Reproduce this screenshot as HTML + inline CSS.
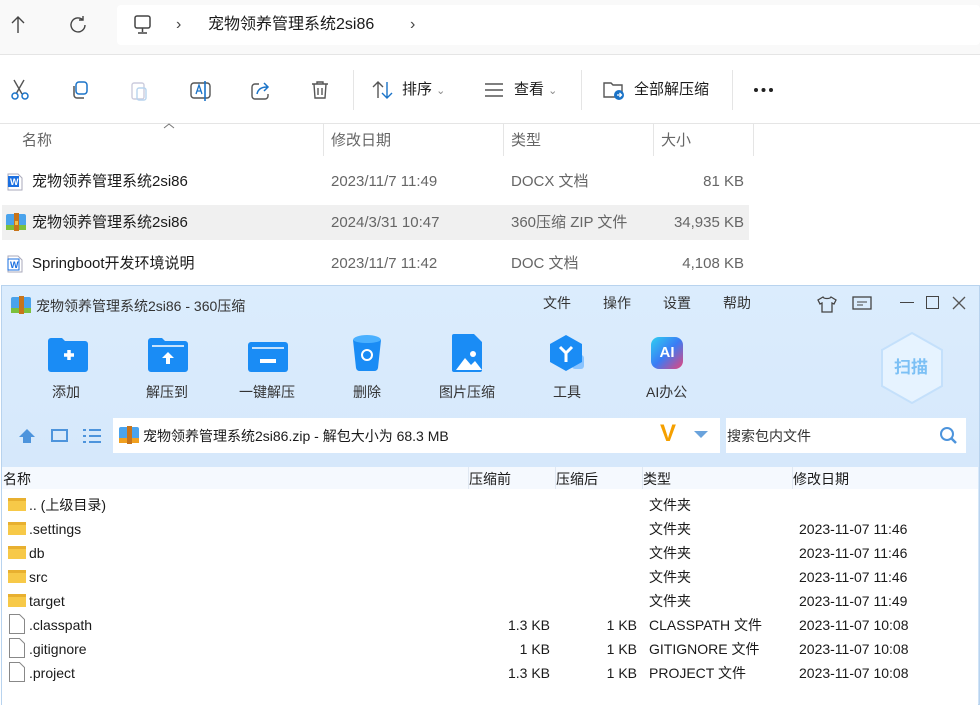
<!DOCTYPE html>
<html><head><meta charset="utf-8"><style>
*{margin:0;padding:0;box-sizing:border-box}
body{width:980px;height:705px;overflow:hidden;background:#fff;font-family:"Liberation Sans","Noto Sans CJK SC",sans-serif;position:relative;color:#1a1a1a;line-height:20px}
.a{position:absolute;white-space:nowrap}
.t{font-size:15px}
.g{color:#666}
.s{font-size:14px}
</style></head><body>
<div class="a" style="left:0;top:0;width:980px;height:55px;background:#f9f9f9;border-bottom:1px solid #e5e5e5"></div>
<div class="a" style="left:117px;top:5px;width:863px;height:40px;background:#fff;border-radius:4px"></div>
<svg class="a" style="left:10px;top:15px" width="16" height="20"><path d="M8 2v16M2 8l6-6 6 6" fill="none" stroke="#444" stroke-width="1.4"/></svg>
<svg class="a" style="left:68px;top:15px" width="20" height="20"><path d="M15 5a7 7 0 1 0 2 5" fill="none" stroke="#444" stroke-width="1.4"/><path d="M15 1v4h-4" fill="none" stroke="#444" stroke-width="1.4"/></svg>
<svg class="a" style="left:133px;top:15px" width="20" height="20"><rect x="2" y="1" width="15" height="12" rx="2" fill="none" stroke="#444" stroke-width="1.5"/><path d="M9.5 13v4M5 18h9" stroke="#444" stroke-width="1.5"/></svg>
<div class="a" style="left:176px;top:15px;font-size:16px;color:#444">›</div>
<div class="a" style="left:208px;top:15px;font-size:16px">宠物领养管理系统2si86</div>
<div class="a" style="left:410px;top:15px;font-size:16px;color:#444">›</div>

<svg class="a" style="left:8px;top:78px" width="24" height="24"><path d="M6 2l8 14M16 2L8 16" stroke="#555" stroke-width="1.4"/><circle cx="7" cy="18" r="3" fill="none" stroke="#1a73c8" stroke-width="1.5"/><circle cx="17" cy="18" r="3" fill="none" stroke="#1a73c8" stroke-width="1.5"/></svg>
<svg class="a" style="left:70px;top:80px" width="20" height="20"><rect x="6" y="2" width="11" height="12" rx="3" fill="none" stroke="#1a73c8" stroke-width="1.5"/><path d="M4 6v9a3 3 0 0 0 3 3h7" fill="none" stroke="#555" stroke-width="1.5"/></svg>
<svg class="a" style="left:130px;top:80px" width="20" height="22"><rect x="2" y="3" width="12" height="16" rx="2" fill="none" stroke="#ccd" stroke-width="1.4"/><rect x="7" y="8" width="9" height="12" rx="2" fill="none" stroke="#b8d4ee" stroke-width="1.4"/></svg>
<svg class="a" style="left:189px;top:80px" width="24" height="22"><rect x="2" y="3" width="19" height="15" rx="3" fill="none" stroke="#555" stroke-width="1.4"/><path d="M7 14l3-9 3 9M8 11h4" stroke="#1a73c8" stroke-width="1.3" fill="none"/><path d="M16 1v20" stroke="#1a73c8" stroke-width="1.6"/></svg>
<svg class="a" style="left:250px;top:80px" width="22" height="22"><path d="M9 4H5a3 3 0 0 0-3 3v9a3 3 0 0 0 3 3h10a3 3 0 0 0 3-3v-2" fill="none" stroke="#555" stroke-width="1.4"/><path d="M7 14c1-5 5-7 10-7M14 3l4 4-4 4" fill="none" stroke="#1a73c8" stroke-width="1.5"/></svg>
<svg class="a" style="left:309px;top:79px" width="22" height="22"><path d="M3 5h16M8 5V3h6v2M5 5l1 14h10l1-14M9 9v7M13 9v7" fill="none" stroke="#555" stroke-width="1.4"/></svg>
<div class="a" style="left:353px;top:70px;width:1px;height:40px;background:#e5e5e5"></div>
<svg class="a" style="left:372px;top:80px" width="22" height="20"><path d="M6 18V2M1 7l5-5 5 5" fill="none" stroke="#555" stroke-width="1.4"/><path d="M15 2v16M10 13l5 5 5-5" fill="none" stroke="#1a73c8" stroke-width="1.4"/></svg>
<div class="a" style="left:402px;top:80px;font-size:15px">排序 <span style="color:#888;font-size:11px">⌄</span></div>
<svg class="a" style="left:484px;top:82px" width="20" height="16"><path d="M1 2h18M1 8h18M1 14h18" stroke="#555" stroke-width="1.4"/></svg>
<div class="a" style="left:514px;top:80px;font-size:15px">查看 <span style="color:#888;font-size:11px">⌄</span></div>
<div class="a" style="left:581px;top:70px;width:1px;height:40px;background:#e5e5e5"></div>
<svg class="a" style="left:602px;top:78px" width="24" height="24"><path d="M2 5h7l2 2h9v12H2z" fill="none" stroke="#555" stroke-width="1.4"/><circle cx="17" cy="17" r="5" fill="#1a73c8"/><path d="M15 17h4M17.5 15l2 2-2 2" stroke="#fff" stroke-width="1.3" fill="none"/></svg>
<div class="a" style="left:634px;top:80px;font-size:15px">全部解压缩</div>
<div class="a" style="left:732px;top:70px;width:1px;height:40px;background:#e5e5e5"></div>
<svg class="a" style="left:753px;top:87px" width="22" height="6"><circle cx="3" cy="3" r="2" fill="#222"/><circle cx="10.5" cy="3" r="2" fill="#222"/><circle cx="18" cy="3" r="2" fill="#222"/></svg>
<div class="a" style="left:0;top:123px;width:980px;height:1px;background:#e5e5e5"></div>

<svg class="a" style="left:163px;top:122px" width="12" height="8"><path d="M1 6l5-4 5 4" fill="none" stroke="#777"/></svg>
<div class="a g t" style="left:22px;top:131px">名称</div>
<div class="a" style="left:323px;top:124px;width:1px;height:32px;background:#e5e5e5"></div>
<div class="a g t" style="left:331px;top:131px">修改日期</div>
<div class="a" style="left:503px;top:124px;width:1px;height:32px;background:#e5e5e5"></div>
<div class="a g t" style="left:511px;top:131px">类型</div>
<div class="a" style="left:653px;top:124px;width:1px;height:32px;background:#e5e5e5"></div>
<div class="a g t" style="left:661px;top:131px">大小</div>
<div class="a" style="left:753px;top:124px;width:1px;height:32px;background:#e5e5e5"></div>

<div class="a" style="left:2px;top:205px;width:747px;height:35px;background:#f0f0f0"></div>
<svg class="a" style="left:7px;top:173px" width="16" height="18"><path d="M1 1h10l4 4v12H1z" fill="#fff" stroke="#aab"/><rect x="1" y="3" width="11" height="11" fill="#1a6fe0"/><text x="3" y="12" fill="#fff" font-size="9" font-weight="bold" font-family="Liberation Sans">W</text></svg>
<div class="a t" style="left:32px;top:172px">宠物领养管理系统2si86</div>
<div class="a t g" style="left:331px;top:172px">2023/11/7 11:49</div>
<div class="a t g" style="left:511px;top:172px">DOCX 文档</div>
<div class="a t g" style="left:664px;top:172px;width:80px;text-align:right">81 KB</div>
<svg class="a" style="left:6px;top:213px" width="20" height="18"><rect x="0" y="1" width="20" height="15" rx="2" fill="#4aa3ec"/><rect x="0" y="12" width="20" height="5" fill="#7cc03c"/><rect x="8" y="0" width="5" height="18" fill="#c8741a"/><rect x="9" y="8" width="3" height="4" fill="#f3c04a"/></svg>
<div class="a t" style="left:32px;top:213px">宠物领养管理系统2si86</div>
<div class="a t g" style="left:331px;top:213px">2024/3/31 10:47</div>
<div class="a t g" style="left:511px;top:213px">360压缩 ZIP 文件</div>
<div class="a t g" style="left:644px;top:213px;width:100px;text-align:right">34,935 KB</div>
<svg class="a" style="left:7px;top:255px" width="16" height="18"><path d="M1 1h10l4 4v12H1z" fill="#fff" stroke="#aab"/><rect x="1" y="4" width="11" height="11" fill="#fff" stroke="#1a6fe0"/><text x="3" y="13" fill="#1a6fe0" font-size="9" font-weight="bold" font-family="Liberation Sans">W</text></svg>
<div class="a t" style="left:32px;top:254px">Springboot开发环境说明</div>
<div class="a t g" style="left:331px;top:254px">2023/11/7 11:42</div>
<div class="a t g" style="left:511px;top:254px">DOC 文档</div>
<div class="a t g" style="left:644px;top:254px;width:100px;text-align:right">4,108 KB</div>

<!-- 360 window -->
<div class="a" style="left:1px;top:285px;width:979px;height:420px;background:linear-gradient(#dbecfd,#cfe3f8);border:1px solid #b8d3ee"></div>
<svg class="a" style="left:11px;top:296px" width="20" height="18"><rect x="0" y="1" width="20" height="15" rx="2" fill="#4aa3ec"/><rect x="0" y="12" width="20" height="5" fill="#7cc03c"/><rect x="8" y="0" width="5" height="18" fill="#c8741a"/></svg>
<div class="a s" style="left:36px;top:296px;color:#333">宠物领养管理系统2si86 - 360压缩</div>
<div class="a s" style="left:543px;top:293px;color:#333">文件</div>
<div class="a s" style="left:603px;top:293px;color:#333">操作</div>
<div class="a s" style="left:663px;top:293px;color:#333">设置</div>
<div class="a s" style="left:723px;top:293px;color:#333">帮助</div>
<svg class="a" style="left:816px;top:295px" width="22" height="18"><path d="M7 2l-5 3 2 4 2-1v9h10V8l2 1 2-4-5-3c-1 2-7 2-8 0z" fill="none" stroke="#444" stroke-width="1.3"/></svg>
<svg class="a" style="left:852px;top:296px" width="20" height="16"><rect x="1" y="1" width="18" height="12" fill="none" stroke="#444" stroke-width="1.3"/><path d="M5 6h10M5 9h6" stroke="#444"/></svg>
<div class="a" style="left:900px;top:302px;width:14px;height:1px;background:#444"></div>
<div class="a" style="left:926px;top:296px;width:13px;height:13px;border:1.5px solid #444"></div>
<svg class="a" style="left:952px;top:296px" width="14" height="14"><path d="M1 1l12 12M13 1L1 13" stroke="#555" stroke-width="1.3"/></svg>

<svg class="a" style="left:48px;top:338px" width="40" height="34"><path d="M0 3a3 3 0 0 1 3-3h11l3 3h20a3 3 0 0 1 3 3v25a3 3 0 0 1-3 3H3a3 3 0 0 1-3-3z" fill="#1a8cf5"/><path d="M16 17h10M21 12v10" stroke="#fff" stroke-width="3.5"/></svg>
<div class="a s" style="left:52px;top:382px;color:#333">添加</div>
<svg class="a" style="left:148px;top:338px" width="40" height="34"><path d="M0 3a3 3 0 0 1 3-3h11l3 3h20a3 3 0 0 1 3 3v25a3 3 0 0 1-3 3H3a3 3 0 0 1-3-3z" fill="#1a8cf5"/><path d="M4 8h32" stroke="#fff" stroke-width="1.5"/><path d="M14 20l6-6 6 6h-4v6h-4v-6z" fill="#fff"/></svg>
<div class="a s" style="left:146px;top:382px;color:#333">解压到</div>
<svg class="a" style="left:248px;top:342px" width="40" height="30"><rect x="0" y="0" width="40" height="30" rx="3" fill="#1a8cf5"/><path d="M4 6h32" stroke="#fff" stroke-width="1.5"/><rect x="12" y="17" width="16" height="4" fill="#fff"/></svg>
<div class="a s" style="left:239px;top:382px;color:#333">一键解压</div>
<svg class="a" style="left:352px;top:334px" width="30" height="38"><ellipse cx="15" cy="6" rx="14" ry="5" fill="#4ab0ff"/><path d="M1 6l3 28a4 4 0 0 0 4 3h14a4 4 0 0 0 4-3l3-28c-4 4-24 4-28 0z" fill="#1a8cf5"/><circle cx="15" cy="21" r="5" fill="none" stroke="#fff" stroke-width="2"/></svg>
<div class="a s" style="left:353px;top:382px;color:#333">删除</div>
<svg class="a" style="left:452px;top:334px" width="30" height="38"><path d="M0 2a2 2 0 0 1 2-2h20l8 8v28a2 2 0 0 1-2 2H2a2 2 0 0 1-2-2z" fill="#1a8cf5"/><path d="M4 36l9-12 6 7 4-4 7 9z" fill="#fff"/><circle cx="21" cy="20" r="3" fill="#fff"/></svg>
<div class="a s" style="left:439px;top:382px;color:#333">图片压缩</div>
<svg class="a" style="left:550px;top:335px" width="40" height="40"><rect x="22" y="20" width="12" height="14" rx="3" fill="#8ac4ff"/><path d="M16 0l16 9v18l-16 9L0 27V9z" fill="#1a8cf5"/><path d="M10 12l6 6 6-6M16 18v9" stroke="#fff" stroke-width="3" fill="none"/></svg>
<div class="a s" style="left:553px;top:382px;color:#333">工具</div>
<div class="a" style="left:651px;top:337px;width:32px;height:32px;border-radius:8px;background:linear-gradient(135deg,#2fd0f0,#3a7cf5 50%,#e8447a);color:#fff;font-weight:bold;font-size:15px;text-align:center;line-height:32px">AI</div>
<div class="a s" style="left:646px;top:382px;color:#333">AI办公</div>
<svg class="a" style="left:880px;top:332px" width="64" height="72"><path d="M32 1l30 17v36L32 71 2 54V18z" fill="#e6f3ff" stroke="#c4e0fb" stroke-width="2"/></svg>
<div class="a" style="left:894px;top:358px;font-size:17px;font-weight:bold;color:#7cc0f5">扫描</div>

<svg class="a" style="left:18px;top:428px" width="18" height="16"><path d="M9 1l8 8h-4v6H5V9H1z" fill="#4d94dc"/></svg>
<div class="a" style="left:51px;top:429px;width:17px;height:13px;border:2px solid #4d94dc"></div>
<svg class="a" style="left:82px;top:428px" width="20" height="16"><path d="M1 2h3M7 2h12M1 8h3M7 8h12M1 14h3M7 14h12" stroke="#4d94dc" stroke-width="2"/></svg>
<div class="a" style="left:113px;top:418px;width:607px;height:35px;background:#fff"></div>
<svg class="a" style="left:119px;top:426px" width="20" height="18"><rect x="0" y="1" width="20" height="15" rx="2" fill="#4aa3ec"/><rect x="0" y="12" width="20" height="5" fill="#f0a020"/><rect x="8" y="0" width="5" height="18" fill="#c8741a"/></svg>
<div class="a s" style="left:143px;top:426px">宠物领养管理系统2si86.zip - 解包大小为 68.3 MB</div>
<div class="a" style="left:660px;top:424px;font-size:24px;font-weight:bold;color:#f5a000">V</div>
<div class="a" style="left:694px;top:431px;width:0;height:0;border-left:7px solid transparent;border-right:7px solid transparent;border-top:7px solid #6aa3dc"></div>
<div class="a" style="left:726px;top:418px;width:240px;height:35px;background:#fff"></div>
<div class="a s" style="left:727px;top:426px;color:#333">搜索包内文件</div>
<svg class="a" style="left:939px;top:426px" width="20" height="20"><circle cx="8" cy="8" r="6" fill="none" stroke="#4d94dc" stroke-width="2"/><path d="M12 12l5 5" stroke="#4d94dc" stroke-width="2.5"/></svg>

<div class="a" style="left:2px;top:467px;width:976px;height:238px;background:#fff"></div>
<div class="a" style="left:2px;top:467px;width:976px;height:22px;background:#f5f9fe"></div>
<div class="a s" style="left:3px;top:469px">名称</div>
<div class="a" style="left:468px;top:467px;width:1px;height:22px;background:#e0e8f2"></div>
<div class="a s" style="left:469px;top:469px">压缩前</div>
<div class="a" style="left:555px;top:467px;width:1px;height:22px;background:#e0e8f2"></div>
<div class="a s" style="left:556px;top:469px">压缩后</div>
<div class="a" style="left:642px;top:467px;width:1px;height:22px;background:#e0e8f2"></div>
<div class="a s" style="left:643px;top:469px">类型</div>
<div class="a" style="left:792px;top:467px;width:1px;height:22px;background:#e0e8f2"></div>
<div class="a s" style="left:793px;top:469px">修改日期</div>

<div class="a" style="left:8px;top:498px;width:18px;height:13px;background:#f7c948;border-top:3px solid #e8b030"></div>
<div class="a s" style="left:29px;top:495px">.. (上级目录)</div><div class="a s" style="left:649px;top:495px">文件夹</div>
<div class="a" style="left:8px;top:522px;width:18px;height:13px;background:#f7c948;border-top:3px solid #e8b030"></div>
<div class="a s" style="left:29px;top:519px">.settings</div><div class="a s" style="left:649px;top:519px">文件夹</div><div class="a s" style="left:799px;top:519px">2023-11-07 11:46</div>
<div class="a" style="left:8px;top:546px;width:18px;height:13px;background:#f7c948;border-top:3px solid #e8b030"></div>
<div class="a s" style="left:29px;top:543px">db</div><div class="a s" style="left:649px;top:543px">文件夹</div><div class="a s" style="left:799px;top:543px">2023-11-07 11:46</div>
<div class="a" style="left:8px;top:570px;width:18px;height:13px;background:#f7c948;border-top:3px solid #e8b030"></div>
<div class="a s" style="left:29px;top:567px">src</div><div class="a s" style="left:649px;top:567px">文件夹</div><div class="a s" style="left:799px;top:567px">2023-11-07 11:46</div>
<div class="a" style="left:8px;top:594px;width:18px;height:13px;background:#f7c948;border-top:3px solid #e8b030"></div>
<div class="a s" style="left:29px;top:591px">target</div><div class="a s" style="left:649px;top:591px">文件夹</div><div class="a s" style="left:799px;top:591px">2023-11-07 11:49</div>
<svg class="a" style="left:9px;top:614px" width="16" height="20"><path d="M.5.5h10l5 5v14H.5z" fill="#fff" stroke="#888"/></svg>
<div class="a s" style="left:29px;top:615px">.classpath</div><div class="a s" style="left:470px;top:615px;width:80px;text-align:right">1.3 KB</div><div class="a s" style="left:557px;top:615px;width:80px;text-align:right">1 KB</div><div class="a s" style="left:649px;top:615px">CLASSPATH 文件</div><div class="a s" style="left:799px;top:615px">2023-11-07 10:08</div>
<svg class="a" style="left:9px;top:638px" width="16" height="20"><path d="M.5.5h10l5 5v14H.5z" fill="#fff" stroke="#888"/></svg>
<div class="a s" style="left:29px;top:639px">.gitignore</div><div class="a s" style="left:470px;top:639px;width:80px;text-align:right">1 KB</div><div class="a s" style="left:557px;top:639px;width:80px;text-align:right">1 KB</div><div class="a s" style="left:649px;top:639px">GITIGNORE 文件</div><div class="a s" style="left:799px;top:639px">2023-11-07 10:08</div>
<svg class="a" style="left:9px;top:662px" width="16" height="20"><path d="M.5.5h10l5 5v14H.5z" fill="#fff" stroke="#888"/></svg>
<div class="a s" style="left:29px;top:663px">.project</div><div class="a s" style="left:470px;top:663px;width:80px;text-align:right">1.3 KB</div><div class="a s" style="left:557px;top:663px;width:80px;text-align:right">1 KB</div><div class="a s" style="left:649px;top:663px">PROJECT 文件</div><div class="a s" style="left:799px;top:663px">2023-11-07 10:08</div>
</body></html>
